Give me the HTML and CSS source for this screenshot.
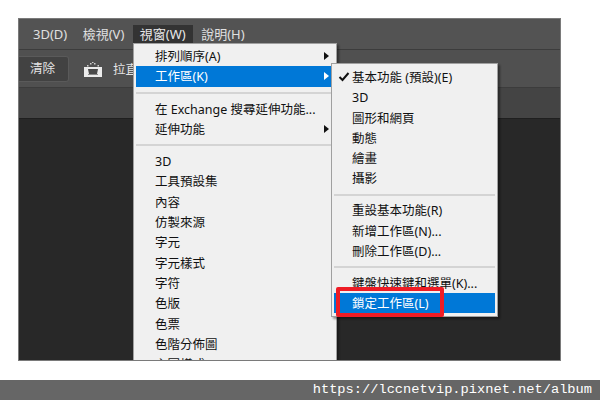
FILE: index.html
```html
<!DOCTYPE html>
<html lang="zh-Hant">
<head>
<meta charset="utf-8">
<title>視窗選單</title>
<link rel="stylesheet" href="styles.css">
</head>
<body>
<div class="stage">
  <div class="window">
    <div class="menubar">
      <span class="top">3D(D)</span>
      <span class="top">檢視(V)</span>
      <span class="top active">視窗(W)</span>
      <span class="top">說明(H)</span>
    </div>
    <div class="options">
      <span class="btn">清除</span>
      <svg class="straighten" width="20" height="16" viewBox="0 0 20 16">
        <path d="M1 6h18v10H1z" fill="#ececec"/>
        <path d="M5 8h10l-1 5H6z" fill="#4a4a4a"/>
        <path d="M5 13h10v1H5z" fill="#8a8a8a"/>
        <path d="M4 4h1.500v1.500H4zM7 2h1.500v1.500H7zM11 2h1.500v1.500H11zM14.500 4H16v1.500h-1.500zM9 1h1.500v1H9z" fill="#d0d0d0"/>
      </svg>
      <span class="opt-label">拉直</span>
    </div>
    <div class="tabs"></div>
    <div class="work"></div>

    <div class="menu main">
      <div class="row">排列順序(A)<i class="arrow"></i></div>
      <div class="row on">工作區(K)<i class="arrow"></i></div>
      <div class="sep"></div>
      <div class="row">在 Exchange 搜尋延伸功能...</div>
      <div class="row">延伸功能<i class="arrow"></i></div>
      <div class="sep"></div>
      <div class="row">3D</div>
      <div class="row">工具預設集</div>
      <div class="row">內容</div>
      <div class="row">仿製來源</div>
      <div class="row">字元</div>
      <div class="row">字元樣式</div>
      <div class="row">字符</div>
      <div class="row">色版</div>
      <div class="row">色票</div>
      <div class="row">色階分佈圖</div>
      <div class="row">主圖樣式</div>
    </div>

    <div class="menu sub">
      <div class="row"><svg class="check" width="12" height="10" viewBox="0 0 12 10"><path d="M1.500 5l3 3 6-7" stroke="#111" stroke-width="2" fill="none"/></svg>基本功能 (預設)(E)</div>
      <div class="row">3D</div>
      <div class="row">圖形和網頁</div>
      <div class="row">動態</div>
      <div class="row">繪畫</div>
      <div class="row">攝影</div>
      <div class="sep"></div>
      <div class="row">重設基本功能(R)</div>
      <div class="row">新增工作區(N)...</div>
      <div class="row">刪除工作區(D)...</div>
      <div class="sep"></div>
      <div class="row">鍵盤快速鍵和選單(K)...</div>
      <div class="row on">鎖定工作區(L)</div>
    </div>
    <div class="mark"></div>
  </div>
</div>
<div class="urlbar">https://lccnetvip.pixnet.net/album</div>
</body>
</html>
```
FILE: styles.css
```css
* { box-sizing: border-box; }
html, body { margin: 0; width: 600px; height: 400px; overflow: hidden; background: #fff; }
body { font-family: "Noto Sans", "Noto Sans CJK TC", sans-serif; display: flex; flex-direction: column; }
.stage { height: 380px; padding: 18px 39px 19px 18px; }
.window { position: relative; width: 543px; height: 343px; border: 1px solid #7a7a7a; display: flex; flex-direction: column; overflow: hidden; background: #282828; }
.menubar { height: 31px; background: #535353; border-bottom: 1px solid #3c3c3c; display: flex; align-items: flex-start; padding: 6px 0 0 7px; color: #e0e0e0; font-size: 13px; }
.top { height: 18px; line-height: 18px; padding: 0 7px; margin-right: 1.500px; }
.active { background: #333; color: #e8e8e8; }
.options { height: 38px; background: #505050; border-bottom: 1px solid #3c3c3c; display: flex; align-items: center; color: #e4e4e4; font-size: 12.500px; }
.btn { width: 50px; height: 26px; background: #424242; border: 1px solid #5a5a5a; border-left: 0; border-radius: 0 3px 3px 0; padding-left: 11px; line-height: 23px; margin-right: 14px; }
.straighten { margin-right: 10px; }
.tabs { height: 31px; background: #444; border-bottom: 1px solid #1f1f1f; }
.work { flex: 1; background: #282828; }
.menu { position: absolute; background: #f0f0f0; color: #111; font-size: 12.500px; border: 1px solid #a0a0a0; box-shadow: 2px 2px 2px rgba(0,0,0,.4); padding: 2px; }
.main { left: 114px; top: 24px; width: 204px; height: 330px; }
.main .row { padding-left: 19px; }
.sub { left: 312px; top: 44px; width: 167px; height: 254px; padding-top: 3px; }
.row { position: relative; height: 20.300px; line-height: 22px; padding-left: 18px; white-space: nowrap; }
.on { background: #0078d7; color: #fff; }
.sep { height: 2px; margin: 5px 0; background: #d4d4d4; }
.sub .sep { margin: 4.800px 0; }
.arrow { position: absolute; right: 5px; top: 6px; width: 0; height: 0; border-left: 5px solid #111; border-top: 4px solid transparent; border-bottom: 4px solid transparent; }
.on .arrow { border-left-color: #fff; }
.check { position: absolute; left: 4px; top: 5px; }
.mark { position: absolute; left: 317px; top: 268px; width: 108px; height: 30px; border: 4px solid #ee1c25; border-radius: 2px; }
.urlbar { height: 20px; background: #666; color: #fff; font-family: "Liberation Mono", monospace; font-size: 13.700px; line-height: 20px; text-align: right; padding-right: 8px; }
```
